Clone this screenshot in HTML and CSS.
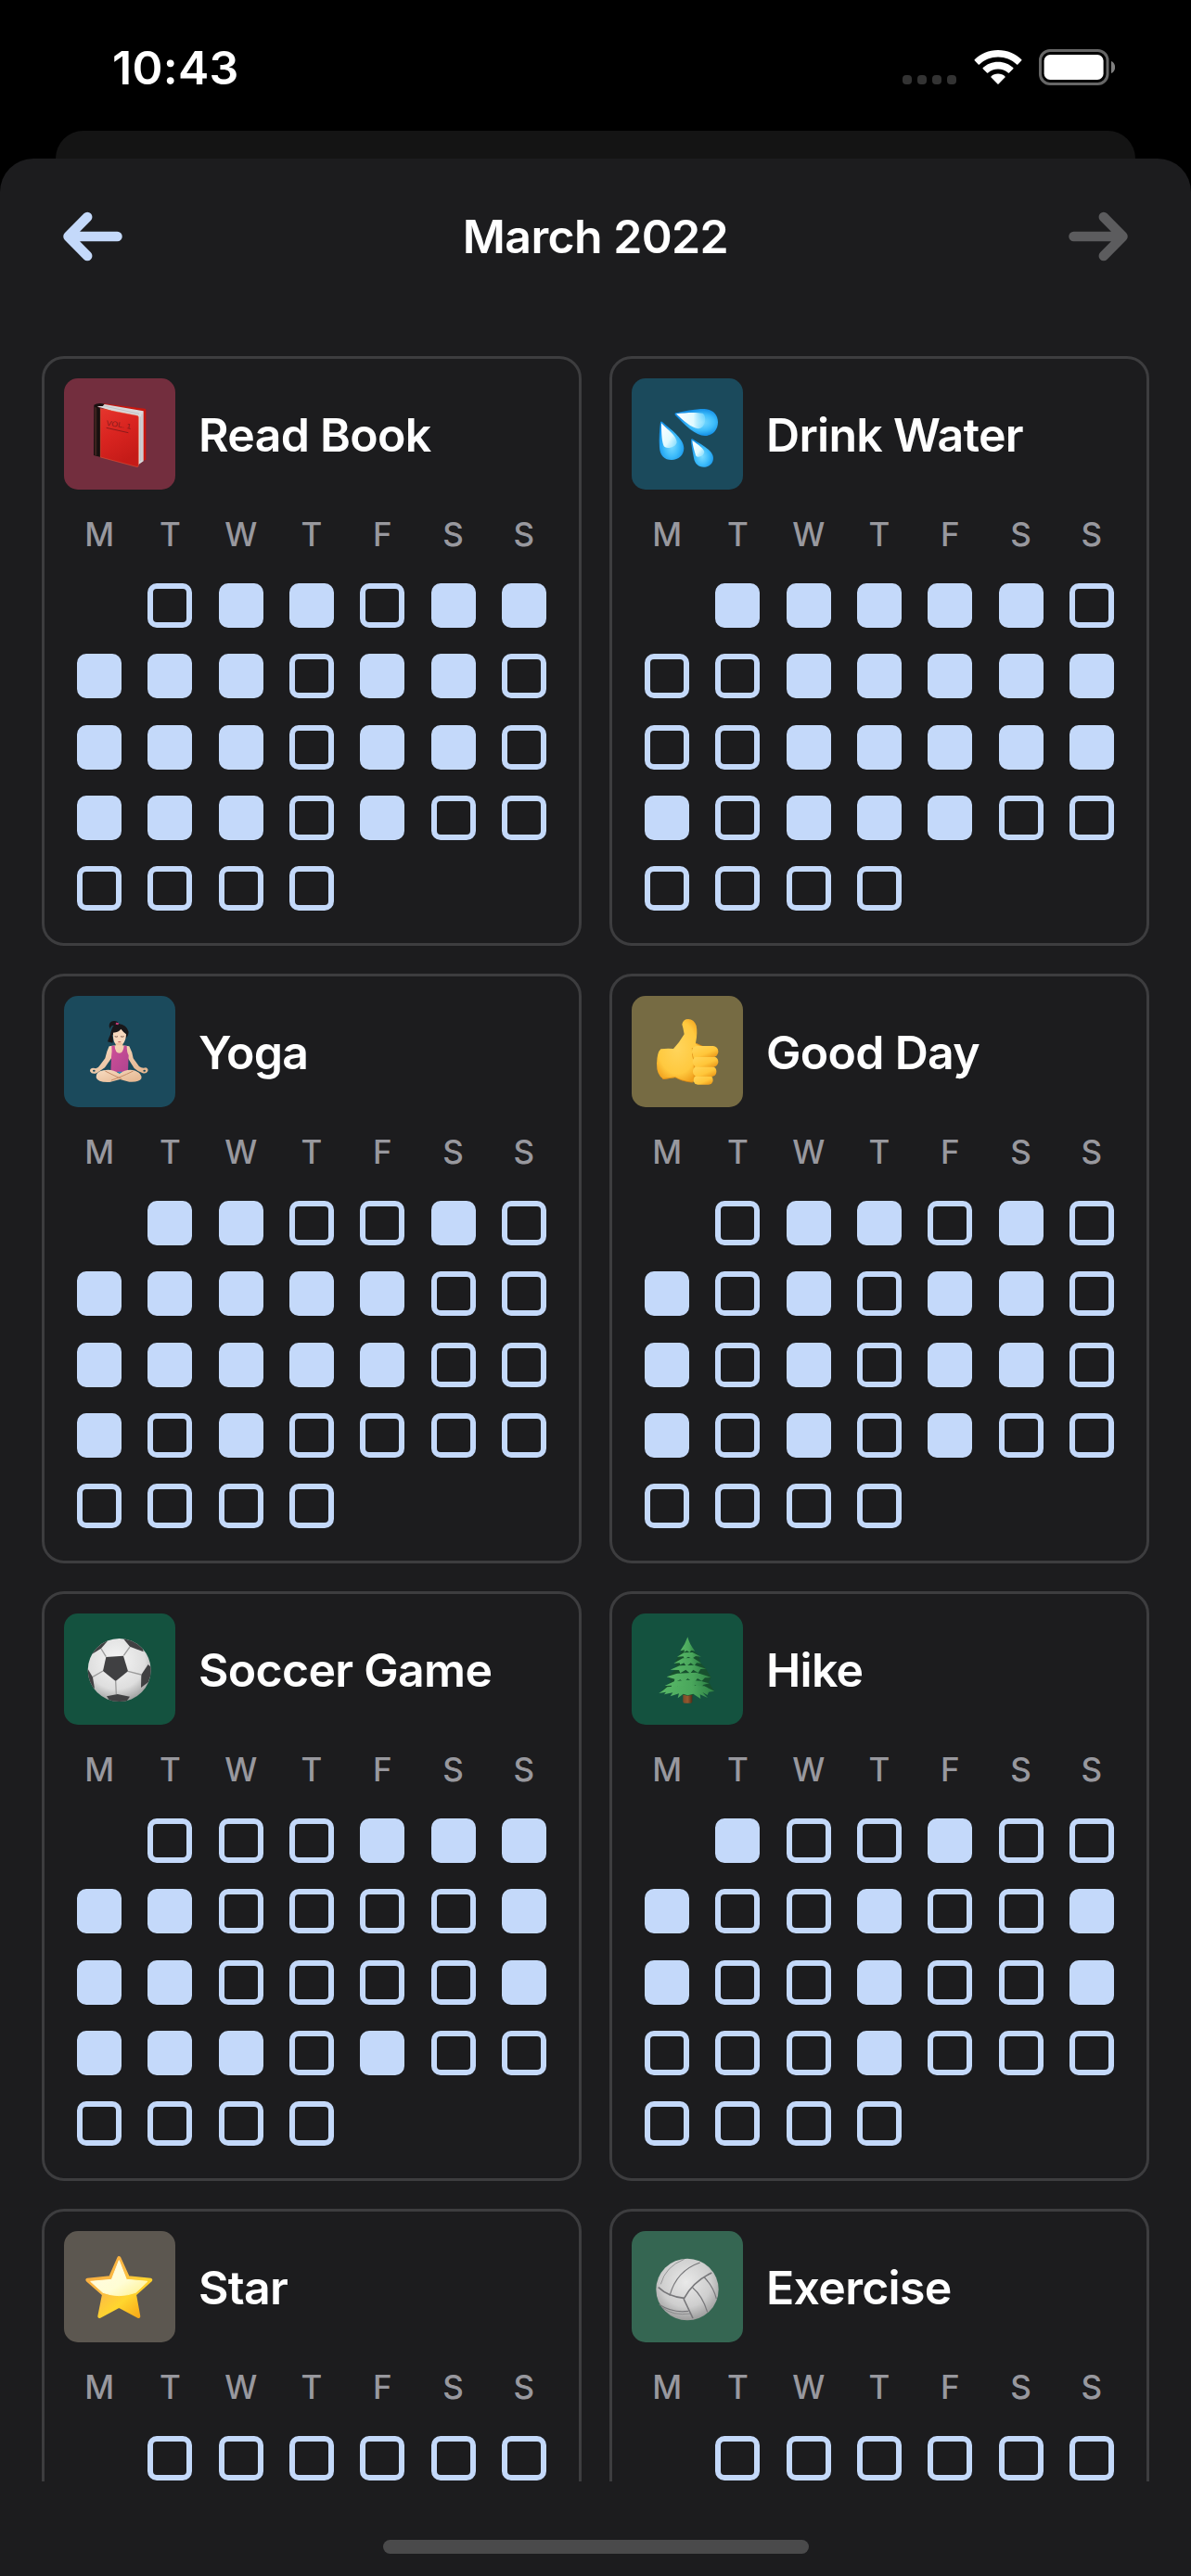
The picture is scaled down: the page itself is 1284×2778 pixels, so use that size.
FILE: index.html
```html
<!DOCTYPE html>
<html lang="en">
<head>
<meta charset="utf-8">
<title>March 2022</title>
<link rel="stylesheet" href="styles.css">
</head>
<body>
<div class="phone">
  <header class="status">
    <span class="time">10:43</span>
    <div class="indicators">
      <div class="signal"><i></i><i></i><i></i><i></i></div>
      <svg class="wifi" width="52" height="38" viewBox="0 0 52 38">
        <path d="M26 0C36 0 45 4 51.300 10.200Q51.800 10.800 51.300 11.300L47.300 15.500Q46.700 16 46.100 15.500C40.700 10.500 33.700 7.600 26 7.600S11.300 10.500 5.900 15.500Q5.300 16 4.700 15.500L.7 11.300Q.2 10.800 .7 10.200C7 4 16 0 26 0Z"/>
        <path d="M26 12.800C32.500 12.800 38 15.200 42.300 19.100Q42.800 19.700 42.300 20.300L38 24.600Q37.400 25.100 36.800 24.600C33.900 22 30.200 20.500 26 20.500S18.100 22 15.200 24.600Q14.600 25.100 14 24.600L9.700 20.300Q9.200 19.700 9.700 19.100C14 15.200 19.500 12.800 26 12.800Z"/>
        <path d="M26 25.600C29 25.600 31.500 26.600 33.400 28.200Q33.900 28.800 33.400 29.400L26.600 36.500Q26 37.100 25.400 36.500L18.600 29.400Q18.100 28.800 18.600 28.200C20.500 26.600 23 25.600 26 25.600Z"/>
      </svg>
      <svg class="battery" width="82" height="39" viewBox="0 0 82 39">
        <rect class="shell" x="1.500" y="1.500" width="72.500" height="36" rx="10.500"/>
        <rect class="charge" x="5.600" y="6" width="64" height="27" rx="6.500"/>
        <path class="nub" d="M78 13C83.500 15 83.500 24 78 26Z"/>
      </svg>
    </div>
  </header>
  <div class="sheet-behind"></div>
  <main class="sheet">
    <nav class="month">
      <svg class="arrow" width="64" height="54" viewBox="0 0 64 54"><path d="M58.500 27H8M26.200 6L5.500 27L26.200 48"/></svg>
      <h1>March 2022</h1>
      <svg class="arrow next" width="64" height="54" viewBox="0 0 64 54"><path d="M5.500 27H56M37.800 6L58.500 27L37.800 48"/></svg>
    </nav>
    <div class="habits">

      <section class="card">
        <div class="head">
          <div class="icon berry">
            <svg viewBox="27 24 360 360">
              <defs><linearGradient id="cover" x2=".4" y2="1"><stop offset="0" stop-color="#e5352d"/><stop offset=".5" stop-color="#d92420"/><stop offset="1" stop-color="#c51b18"/></linearGradient></defs>
              <path fill="#c8170f" d="M155 106L289 122Q292 123 292 127V287L276 293L155 130Z"/>
              <path fill="#d9d9da" d="M132 114L158 108L284 130V292L267 304L250 150Z"/>
              <path stroke="#ababaf" stroke-width="1.500" fill="none" d="M274 148V292M279 140V290M150 112L270 139"/>
              <path fill="#18100f" d="M124 110Q136 102 158 107L152 114L134 114L146 124V279L123 273Z"/>
              <path fill="#3b211d" d="M126 116L133 119V274L126 272Z"/>
              <path fill="url(#cover)" stroke="#ef5a36" stroke-width="1.500" d="M145 122L264 145Q268 146 268 150V306Q267 312 261 310L145 279Z"/>
              <text class="volume" transform="translate(163 176) rotate(9) scale(1.080 1)">VOL. 1</text>
              <path stroke="#8c1a1a" stroke-width="3" d="M164 184L235 200"/>
            </svg>
          </div>
          <h2>Read Book</h2>
        </div>
        <div class="week"><span>M</span><span>T</span><span>W</span><span>T</span><span>F</span><span>S</span><span>S</span></div>
        <div class="days">
          <i></i><i class="on"></i><i class="on"></i><i></i><i class="on"></i><i class="on"></i>
          <i class="on"></i><i class="on"></i><i class="on"></i><i></i><i class="on"></i><i class="on"></i><i></i>
          <i class="on"></i><i class="on"></i><i class="on"></i><i></i><i class="on"></i><i class="on"></i><i></i>
          <i class="on"></i><i class="on"></i><i class="on"></i><i></i><i class="on"></i><i></i><i></i>
          <i></i><i></i><i></i><i></i>
        </div>
      </section>

      <section class="card">
        <div class="head">
          <div class="icon ocean">
            <svg viewBox="33 24 360 360">
              <defs>
                <radialGradient id="drop" cx=".5" cy=".62" r=".55"><stop offset="0" stop-color="#7fdcff"/><stop offset=".55" stop-color="#3dbcfb"/><stop offset="1" stop-color="#1793e8"/></radialGradient>
                <radialGradient id="dropWide" cx=".62" cy=".5" r=".5"><stop offset="0" stop-color="#7fdcff"/><stop offset=".6" stop-color="#3dbcfb"/><stop offset="1" stop-color="#148fe6"/></radialGradient>
                <linearGradient id="shine" y2="1"><stop offset="0" stop-color="#fff"/><stop offset=".6" stop-color="#e0faff"/><stop offset="1" stop-color="#9ce6ff" stop-opacity=".5"/></linearGradient>
                <linearGradient id="shineWide" x2="1"><stop offset="0" stop-color="#fff"/><stop offset=".6" stop-color="#e0faff"/><stop offset="1" stop-color="#9ce6ff" stop-opacity=".4"/></linearGradient>
              </defs>
              <path fill="url(#dropWide)" d="M175 136C200 131 235 123 268 123C295 123 312 142 312 166C312 192 294 210 270 210C240 210 205 175 174 143Q171 138 175 136Z"/>
              <path fill="url(#shineWide)" d="M177 139C205 135 240 133 262 137C276 142 274 184 248 187C225 184 200 161 177 139Z"/>
              <path fill="url(#drop)" d="M126 166Q128 161 133 166C155 187 202 218 202 250C202 273 184 288 162 288C139 288 124 272 123 248C121 220 123 190 126 166Z"/>
              <path fill="url(#shine)" d="M129 169C151 191 178 211 179 230C178 248 141 256 136 241C129 221 129 190 129 169Z"/>
              <path fill="url(#drop)" d="M225 222Q228 217 233 222C256 237 297 257 297 282C297 300 283 311 266 311C249 311 237 300 234 282C230 259 225 240 225 222Z"/>
              <path fill="url(#shine)" d="M229 225C247 238 267 251 268 262C266 278 243 284 240 272C234 253 230 239 229 225Z"/>
            </svg>
          </div>
          <h2>Drink Water</h2>
        </div>
        <div class="week"><span>M</span><span>T</span><span>W</span><span>T</span><span>F</span><span>S</span><span>S</span></div>
        <div class="days">
          <i class="on"></i><i class="on"></i><i class="on"></i><i class="on"></i><i class="on"></i><i></i>
          <i></i><i></i><i class="on"></i><i class="on"></i><i class="on"></i><i class="on"></i><i class="on"></i>
          <i></i><i></i><i class="on"></i><i class="on"></i><i class="on"></i><i class="on"></i><i class="on"></i>
          <i class="on"></i><i></i><i class="on"></i><i class="on"></i><i class="on"></i><i></i><i></i>
          <i></i><i></i><i></i><i></i>
        </div>
      </section>

      <section class="card">
        <div class="head">
          <div class="icon ocean">
            <svg viewBox="27 24 360 360">
              <defs>
                <linearGradient id="skin" y2="1"><stop offset="0" stop-color="#f8dcc2"/><stop offset="1" stop-color="#e3b48d"/></linearGradient>
                <linearGradient id="top" y2="1"><stop offset="0" stop-color="#cf4f97"/><stop offset="1" stop-color="#b04490"/></linearGradient>
              </defs>
              <path fill="#19171a" d="M173 123Q172 107 188 105Q200 104 204 114Q230 118 236 140Q235 155 226 160L182 150Q188 168 184 176L168 172Q172 158 177 149Q180 130 188 120Q178 118 177 131Z"/>
              <path fill="#c33a78" d="M195 110L205 112L202 118L194 116Z"/>
              <path fill="#f7d8bd" d="M186 143Q205 141 211 131Q219 141 228 148Q228 168 217 180Q205 190 192 178Q184 165 186 143Z"/>
              <path fill="#edc3a1" d="M194 176H217V192H194Z"/>
              <path stroke="#66433a" stroke-width="2.500" fill="none" d="M191 155Q196 158 201 155M210 155Q216 158 221 155"/>
              <path stroke="#bd5b55" stroke-width="3" d="M202 173H211"/>
              <path fill="url(#skin)" d="M173 187Q205 180 238 187Q248 205 251 226L270 252Q280 260 292 256Q301 260 298 268Q292 278 280 273Q262 266 254 258L234 226L180 226L159 256L134 273Q118 280 111 268Q110 257 122 257Q136 262 142 250L160 226Q165 203 173 187Z"/>
              <path fill="url(#top)" d="M181 185H191Q192 208 206 209Q219 208 221 185H230Q230 207 236 216L234 270H178L180 222Q183 205 181 185Z"/>
              <path fill="url(#skin)" d="M131 288Q129 270 154 265Q180 258 206 275Q232 258 258 266Q281 275 277 292Q270 304 238 302L208 294L175 303Q136 305 131 288Z"/>
              <path stroke="#c78d68" stroke-width="3" fill="none" d="M160 267Q185 280 214 293M251 267Q231 277 207 287L180 297"/>
              <path fill="#278ec6" d="M198 269H216L207 275Z"/>
              <ellipse cx="124" cy="266" rx="4" ry="3" fill="#1b4a5c"/><ellipse cx="287" cy="266" rx="4" ry="3" fill="#1b4a5c"/>
            </svg>
          </div>
          <h2>Yoga</h2>
        </div>
        <div class="week"><span>M</span><span>T</span><span>W</span><span>T</span><span>F</span><span>S</span><span>S</span></div>
        <div class="days">
          <i class="on"></i><i class="on"></i><i></i><i></i><i class="on"></i><i></i>
          <i class="on"></i><i class="on"></i><i class="on"></i><i class="on"></i><i class="on"></i><i></i><i></i>
          <i class="on"></i><i class="on"></i><i class="on"></i><i class="on"></i><i class="on"></i><i></i><i></i>
          <i class="on"></i><i></i><i class="on"></i><i></i><i></i><i></i><i></i>
          <i></i><i></i><i></i><i></i>
        </div>
      </section>

      <section class="card">
        <div class="head">
          <div class="icon olive">
            <svg viewBox="33 24 360 360">
              <defs>
                <radialGradient id="hand" cx=".45" cy=".45" r=".6"><stop offset="0" stop-color="#ffd55c"/><stop offset=".7" stop-color="#ffc93f"/><stop offset="1" stop-color="#f0a01c"/></radialGradient>
                <linearGradient id="finger" y2="1"><stop offset="0" stop-color="#ffd75c"/><stop offset=".6" stop-color="#ffc63a"/><stop offset="1" stop-color="#e88f12"/></linearGradient>
              </defs>
              <path fill="url(#hand)" d="M127 196Q147 193 168 195Q188 174 203 148Q200 128 196 116Q199 99 216 99Q234 99 242 120Q247 143 240 176L262 187L250 297Q230 306 210 301Q190 297 174 288L136 294Q113 280 114 243Q115 207 127 196Z"/>
              <path fill="none" stroke="#d88510" stroke-width="3" opacity=".7" d="M132 293L174 287Q194 300 231 304M229 192Q228 220 235 237V300M240 178L263 187"/>
              <rect x="233" y="282" width="63" height="29" rx="14" fill="url(#finger)"/>
              <rect x="231" y="252" width="76" height="33" rx="15" fill="url(#finger)"/>
              <rect x="230" y="220" width="83" height="34" rx="16" fill="url(#finger)"/>
              <rect x="228" y="186" width="85" height="36" rx="17" fill="url(#finger)"/>
            </svg>
          </div>
          <h2>Good Day</h2>
        </div>
        <div class="week"><span>M</span><span>T</span><span>W</span><span>T</span><span>F</span><span>S</span><span>S</span></div>
        <div class="days">
          <i></i><i class="on"></i><i class="on"></i><i></i><i class="on"></i><i></i>
          <i class="on"></i><i></i><i class="on"></i><i></i><i class="on"></i><i class="on"></i><i></i>
          <i class="on"></i><i></i><i class="on"></i><i></i><i class="on"></i><i class="on"></i><i></i>
          <i class="on"></i><i></i><i class="on"></i><i></i><i class="on"></i><i></i><i></i>
          <i></i><i></i><i></i><i></i>
        </div>
      </section>

      <section class="card">
        <div class="head">
          <div class="icon pine">
            <svg viewBox="27 30 360 360">
              <defs>
                <radialGradient id="ball" cx=".45" cy=".35" r=".65"><stop offset="0" stop-color="#f5f5f5"/><stop offset=".7" stop-color="#dedede"/><stop offset="1" stop-color="#a3a3a3"/></radialGradient>
                <clipPath id="ballEdge"><circle cx="206" cy="213" r="102"/></clipPath>
              </defs>
              <circle cx="206" cy="213" r="102" fill="url(#ball)"/>
              <g clip-path="url(#ballEdge)">
                <g fill="#404042">
                  <path d="M163 171L219 167L234 217L194 249L153 216Z"/>
                  <path d="M117 162L147 143L169 118L140 118L108 148Z"/>
                  <path d="M219 112L240 137L284 154L278 122L240 100Z"/>
                  <path d="M299 195L277 228L276 270L300 252L315 210Z"/>
                  <path d="M103 208L120 236L126 273L106 262L96 220Z"/>
                  <path d="M165 298L200 291L240 299L225 320H180Z"/>
                </g>
                <path fill="none" stroke="#9c9c9c" stroke-width="4" d="M147 144L163 170M240 138L220 166M234 217L277 228M153 216L120 235M194 248L196 291"/>
              </g>
            </svg>
          </div>
          <h2>Soccer Game</h2>
        </div>
        <div class="week"><span>M</span><span>T</span><span>W</span><span>T</span><span>F</span><span>S</span><span>S</span></div>
        <div class="days">
          <i></i><i></i><i></i><i class="on"></i><i class="on"></i><i class="on"></i>
          <i class="on"></i><i class="on"></i><i></i><i></i><i></i><i></i><i class="on"></i>
          <i class="on"></i><i class="on"></i><i></i><i></i><i></i><i></i><i class="on"></i>
          <i class="on"></i><i class="on"></i><i class="on"></i><i></i><i class="on"></i><i></i><i></i>
          <i></i><i></i><i></i><i></i>
        </div>
      </section>

      <section class="card">
        <div class="head">
          <div class="icon pine">
            <svg viewBox="33 30 360 360">
              <defs>
                <linearGradient id="trunk" x2="1"><stop offset="0" stop-color="#7c4a29"/><stop offset=".5" stop-color="#95592f"/><stop offset="1" stop-color="#4e2c18"/></linearGradient>
                <linearGradient id="needles" x2="1"><stop offset="0" stop-color="#58b867"/><stop offset=".6" stop-color="#4aa75c"/><stop offset="1" stop-color="#2d8145"/></linearGradient>
              </defs>
              <rect x="199" y="280" width="30" height="40" rx="5" fill="url(#trunk)"/>
              <path fill="#17502e" d="M214 112L230 150L248 163L256 190L272 208L290 237L282 252L300 281L245 290L214 296L180 288L127 284L160 250L150 234L178 208L174 186L190 160Z"/>
              <g fill="url(#needles)">
                <path d="M214 106Q220 130 238 152L226 149L220 156L212 150L202 155L204 148L190 151Q206 130 214 106Z"/>
                <path d="M202 157L230 156L258 170L240 168L228 176L216 170L204 178L200 169L180 170Z"/>
                <path d="M198 175L232 174L259 191L243 190L236 199L224 190L210 201L202 190L190 196L188 190L169 191Z"/>
                <path d="M188 199L236 197L274 209L256 210L248 222L232 212L222 224L208 212L190 223L186 213L158 212Z"/>
                <path d="M180 224L242 221L290 237L270 238L260 248L246 240L234 254L214 240L202 253L190 244L170 254L172 242L146 235Z"/>
                <path d="M172 249L215 245L256 248L284 256L266 260L254 271L238 262L222 276L208 264L192 276L182 266L158 272L163 263L140 264Z"/>
                <path d="M148 268L214 263L268 265L301 281L282 284L278 294L262 285L279 303L254 292L256 306L232 290L214 295L200 290L182 304L186 289L158 298L166 286L138 292L144 284L121 288Q134 281 148 268Z"/>
              </g>
            </svg>
          </div>
          <h2>Hike</h2>
        </div>
        <div class="week"><span>M</span><span>T</span><span>W</span><span>T</span><span>F</span><span>S</span><span>S</span></div>
        <div class="days">
          <i class="on"></i><i></i><i></i><i class="on"></i><i></i><i></i>
          <i class="on"></i><i></i><i></i><i class="on"></i><i></i><i></i><i class="on"></i>
          <i class="on"></i><i></i><i></i><i class="on"></i><i></i><i></i><i class="on"></i>
          <i></i><i></i><i></i><i class="on"></i><i></i><i></i><i></i>
          <i></i><i></i><i></i><i></i>
        </div>
      </section>

      <section class="card">
        <div class="head">
          <div class="icon stone">
            <svg viewBox="27 30 360 360">
              <defs>
                <linearGradient id="star" y2="1"><stop offset="0" stop-color="#f9a63a"/><stop offset=".4" stop-color="#fbbb45"/><stop offset=".65" stop-color="#ffd62e"/><stop offset="1" stop-color="#f69a10"/></linearGradient>
                <linearGradient id="starShine" y2="1"><stop offset="0" stop-color="#fffbe6"/><stop offset=".6" stop-color="#fffdd4"/><stop offset="1" stop-color="#fff08a"/></linearGradient>
              </defs>
              <path fill="url(#star)" stroke="url(#star)" stroke-width="12" stroke-linejoin="round" d="M205 117L234 181L307 188L255 235L268 306L205 272L142 306L156 235L103 188L177 181Z"/>
              <path fill="url(#starShine)" stroke="url(#starShine)" stroke-width="3" stroke-linejoin="round" d="M205 125L229 187L297 193L259 229Q234 238 205 239Q176 238 153 229L113 193L181 187Z"/>
            </svg>
          </div>
          <h2>Star</h2>
        </div>
        <div class="week"><span>M</span><span>T</span><span>W</span><span>T</span><span>F</span><span>S</span><span>S</span></div>
        <div class="days"><i></i><i></i><i></i><i></i><i></i><i></i></div>
      </section>

      <section class="card">
        <div class="head">
          <div class="icon sage">
            <svg viewBox="33 30 360 360">
              <defs><radialGradient id="volley" cx=".48" cy=".38" r=".62"><stop offset="0" stop-color="#e9e9e9"/><stop offset=".65" stop-color="#cecece"/><stop offset="1" stop-color="#9d9d9d"/></radialGradient></defs>
              <ellipse cx="213" cy="219" rx="101" ry="100" fill="url(#volley)"/>
              <g fill="none" stroke="#77777a">
                <path stroke-width="5" d="M119 212Q152 243 203 247Q232 193 292 165M201 249L231 312"/>
                <path stroke-width="3.500" d="M156 239Q178 158 254 132M230 213Q262 240 278 292M268 180Q297 210 307 249M122 268Q165 296 217 289"/>
                <path stroke-width="2" d="M127 202Q142 145 203 121M132 278Q168 305 222 297"/>
              </g>
            </svg>
          </div>
          <h2>Exercise</h2>
        </div>
        <div class="week"><span>M</span><span>T</span><span>W</span><span>T</span><span>F</span><span>S</span><span>S</span></div>
        <div class="days"><i></i><i></i><i></i><i></i><i></i><i></i></div>
      </section>

    </div>
    <footer class="home"><div class="home-bar"></div></footer>
  </main>
</div>
</body>
</html>
```
FILE: styles.css
```css
* { box-sizing: border-box; }
body { margin: 0; background: #000; color: #fff; font-family: Inter, "Liberation Sans", sans-serif; }
h1, h2 { margin: 0; font-size: 50px; font-weight: 600; line-height: 60px; white-space: nowrap; }
h1 { letter-spacing: -0.6px; }
h2 { padding-top: 2px; letter-spacing: -0.7px; }
svg { display: block; flex: none; }

.phone { display: flex; flex-direction: column; width: 1284px; height: 2778px; overflow: hidden; }

.status { display: flex; justify-content: space-between; height: 141px; padding: 43px 82px 0 121px; }
.time { font-size: 50px; line-height: 60px; font-weight: 600; letter-spacing: 0.3px; }
.indicators { display: flex; align-items: flex-start; padding-top: 10px; }
.signal { display: flex; gap: 6px; padding-top: 28px; }
.signal i { width: 10px; height: 10px; border-radius: 4px; background: #333; }
.wifi { margin: 1px 18px 0 19px; fill: #fff; }
.shell { fill: none; stroke: #666; stroke-width: 3; }
.charge { fill: #fff; }
.nub { fill: #808080; }

.sheet-behind { flex: none; height: 30px; margin: 0 60px; border-radius: 36px 36px 0 0; background: #141414; }
.sheet { display: flex; flex-direction: column; flex: 1; min-height: 0; border-radius: 36px 36px 0 0; background: #1c1c1e; }

.month { display: flex; flex: none; align-items: center; justify-content: space-between; height: 213px; padding: 0 68px 45px; }
.arrow { fill: none; stroke: #c4d9fa; stroke-width: 10.5; stroke-linecap: round; stroke-linejoin: round; }
.next { stroke: #5c5c5e; }

.habits { display: grid; grid-template-columns: 582px 582px; grid-auto-rows: 636px; gap: 30px; flex: none; height: 2292px; padding: 0 45px; overflow: hidden; }
.card { padding: 21px; border: 3px solid #3d3d3f; border-radius: 24px; }
.head { display: flex; align-items: center; gap: 25px; }
.icon { flex: none; width: 120px; height: 120px; border-radius: 15px; overflow: hidden; }
.berry { background: #732e3e; }
.ocean { background: #1b4a5c; }
.olive { background: #766b43; }
.pine { background: #14523f; }
.stone { background: #5c5750; }
.sage { background: #356652; }
.volume { font-family: "Liberation Sans", sans-serif; font-size: 24px; fill: #851b1b; }

.week, .days { display: grid; grid-template-columns: repeat(7, 1fr); justify-items: center; }
.week { height: 87px; padding-top: 27px; color: #98989e; font-size: 35px; font-weight: 450; line-height: 42px; }
.days { grid-auto-rows: 76.286px; align-items: center; }
.days i { width: 48px; height: 48px; border: 6px solid #c4d9fa; border-radius: 10px; }
.days i:first-child { grid-column-start: 2; }
.days .on { background: #c4d9fa; }

.home { display: flex; justify-content: center; padding-top: 63px; }
.home-bar { width: 459px; height: 15px; border-radius: 8px; background: #4a4a4b; }
```
